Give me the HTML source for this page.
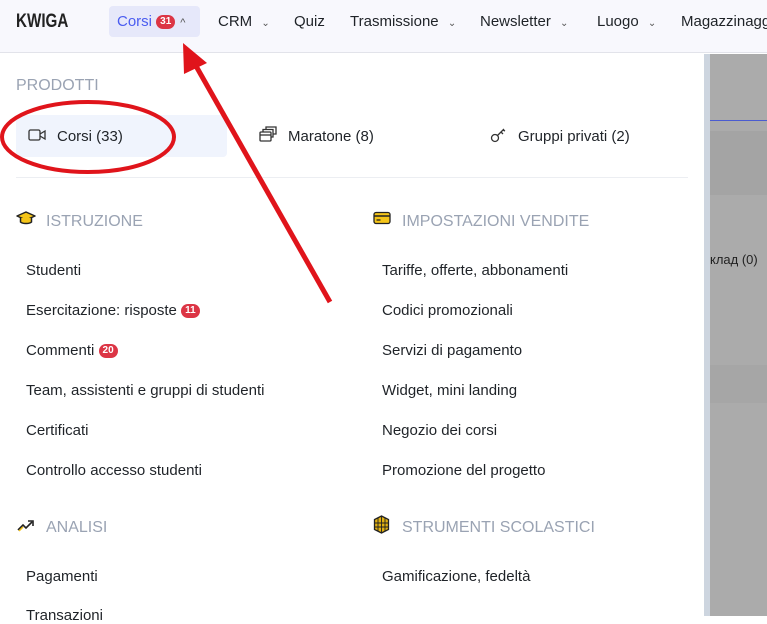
<!DOCTYPE html>
<html><head><meta charset="utf-8"><style>
*{margin:0;padding:0;box-sizing:border-box}
body{width:767px;height:616px;overflow:hidden;background:#fff;font-family:"Liberation Sans",sans-serif;color:#1f2328;position:relative}
.nav{position:absolute;left:0;top:0;width:767px;height:53px;background:#f8f8fd;border-bottom:1px solid #e2e3ea}
.logo{position:absolute;left:16px;top:11px;font-weight:bold;font-size:19px;color:#222;transform:scaleX(.8);transform-origin:left}
.ni{position:absolute;top:13px;font-size:15px;color:#1f2328;white-space:nowrap}
.act{position:absolute;left:109px;top:6px;width:91px;height:31px;background:#e6e8fa;border-radius:4px}
.badge{display:inline-block;background:#dc3545;color:#fff;font-size:10px;font-weight:bold;border-radius:8px;padding:1px 4px;line-height:12px;vertical-align:2px}
.chev{font-size:10px;color:#555;margin-left:5px}
.t{position:absolute;font-size:15px;color:#1f2328;white-space:nowrap}
.h{position:absolute;font-size:16px;color:#9aa3b3;white-space:nowrap}
.right{position:absolute;left:710px;top:54px;width:57px;height:562px;background:#ababab}
</style></head><body>
<div class="nav">
<div class="logo">KWIGA</div>
<div class="act"></div>
<div class="ni" style="left:117px;color:#4a5cf0">Corsi <span class="badge">31</span><span class="chev" style="font-size:11px">^</span></div>
<div class="ni" style="left:218px">CRM <span class="chev">⌄</span></div>
<div class="ni" style="left:294px">Quiz</div>
<div class="ni" style="left:350px">Trasmissione <span class="chev">⌄</span></div>
<div class="ni" style="left:480px">Newsletter <span class="chev">⌄</span></div>
<div class="ni" style="left:597px">Luogo <span class="chev">⌄</span></div>
<div class="ni" style="left:681px">Magazzinaggio</div>
</div>
<div style="position:absolute;left:704px;top:54px;width:6px;height:562px;background:#cdd5df"></div>
<div class="right">
<div style="position:absolute;top:66px;left:0;width:57px;height:1px;background:#4a5cd0"></div>
<div style="position:absolute;top:77px;left:0;width:57px;height:64px;background:#a4a4a4"></div>
<div style="position:absolute;top:311px;left:0;width:57px;height:38px;background:#a6a6a6"></div>
<div style="position:absolute;top:198px;left:0;font-size:13px;color:#222">клад (0)</div>
</div>
<div class="h" style="left:16px;top:77px">PRODOTTI</div>
<div style="position:absolute;left:16px;top:115px;width:211px;height:42px;background:#f0f4fd;border-radius:4px"></div>
<svg style="position:absolute;left:28px;top:128px" width="20" height="14" viewBox="0 0 20 14" fill="none" stroke="#333" stroke-width="1.3"><rect x="1" y="2" width="11" height="10" rx="1.5"/><path d="M12 6l5-3v8l-5-3"/></svg>
<div class="t" style="left:57px;top:128px">Corsi (33)</div>
<svg style="position:absolute;left:259px;top:126px" width="18" height="17" viewBox="0 0 18 17" fill="none" stroke="#333" stroke-width="1.3"><rect x="1" y="6" width="11" height="9" rx="1"/><path d="M4 6V3.5h10V11h-2M7 3.5V1h10v7h-3"/><path d="M1 9h11"/></svg>
<div class="t" style="left:288px;top:128px">Maratone (8)</div>
<svg style="position:absolute;left:490px;top:127px" width="18" height="16" viewBox="0 0 18 16" fill="none" stroke="#333" stroke-width="1.3"><circle cx="5" cy="11" r="3.5"/><path d="M7.5 8.5L14 2M11 5l2 2M13 3l2 1"/></svg>
<div class="t" style="left:518px;top:128px">Gruppi privati (2)</div>
<div style="position:absolute;left:16px;top:177px;width:672px;height:1px;background:#eceef2"></div>
<svg style="position:absolute;left:16px;top:210px" width="20" height="16" viewBox="0 0 20 16"><path d="M10 2L1 6l9 4 9-4z" fill="#f5c518" stroke="#222" stroke-width="1.5" stroke-linejoin="round"/><path d="M4.5 8v4c2 2 9 2 11 0V8" fill="#f5c518" stroke="#222" stroke-width="1.5"/></svg>
<div class="h" style="left:46px;top:213px">ISTRUZIONE</div>
<div class="t" style="left:26px;top:262px">Studenti</div>
<div class="t" style="left:26px;top:302px">Esercitazione: risposte <span class="badge">11</span></div>
<div class="t" style="left:26px;top:342px">Commenti <span class="badge">20</span></div>
<div class="t" style="left:26px;top:382px">Team, assistenti e gruppi di studenti</div>
<div class="t" style="left:26px;top:422px">Certificati</div>
<div class="t" style="left:26px;top:462px">Controllo accesso studenti</div>
<svg style="position:absolute;left:373px;top:211px" width="18" height="14" viewBox="0 0 18 14"><rect x="1" y="1.5" width="16" height="11" rx="2" fill="#f5c518" stroke="#222" stroke-width="1.3"/><path d="M1 5h16" stroke="#222" stroke-width="1.5"/><path d="M3.5 9h4" stroke="#222" stroke-width="1.3"/></svg>
<div class="h" style="left:402px;top:213px">IMPOSTAZIONI VENDITE</div>
<div class="t" style="left:382px;top:262px">Tariffe, offerte, abbonamenti</div>
<div class="t" style="left:382px;top:302px">Codici promozionali</div>
<div class="t" style="left:382px;top:342px">Servizi di pagamento</div>
<div class="t" style="left:382px;top:382px">Widget, mini landing</div>
<div class="t" style="left:382px;top:422px">Negozio dei corsi</div>
<div class="t" style="left:382px;top:462px">Promozione del progetto</div>
<svg style="position:absolute;left:17px;top:518px" width="18" height="14" viewBox="0 0 18 14"><path d="M1 12l5-5 3 3 6-6" fill="none" stroke="#222" stroke-width="1.6"/><path d="M11 3h5v5" fill="none" stroke="#222" stroke-width="1.6"/><path d="M2 13l4-4" stroke="#f5c518" stroke-width="1.5"/></svg>
<div class="h" style="left:46px;top:519px">ANALISI</div>
<svg style="position:absolute;left:373px;top:515px" width="17" height="19" viewBox="0 0 17 19"><path d="M8.5 1l7 3.5v10l-7 3.5-7-3.5v-10z" fill="#e0b010" stroke="#222" stroke-width="1.3"/><path d="M8.5 1v17M1.5 8h14M1.5 12h14M5 2.5v14M12 2.5v14" stroke="#222" stroke-width="0.9"/></svg>
<div class="h" style="left:402px;top:519px">STRUMENTI SCOLASTICI</div>
<div class="t" style="left:26px;top:568px">Pagamenti</div>
<div class="t" style="left:382px;top:568px">Gamificazione, fedeltà</div>
<div class="t" style="left:26px;top:607px">Transazioni</div>
<svg style="position:absolute;left:0;top:0" width="767" height="616">
<ellipse cx="88" cy="137" rx="86" ry="35" fill="none" stroke="#e0141b" stroke-width="4"/>
<path d="M330 302L196 66" stroke="#e0141b" stroke-width="5"/>
<path d="M183 43L207 63 184 74z" fill="#e0141b"/>
</svg>
</body></html>
